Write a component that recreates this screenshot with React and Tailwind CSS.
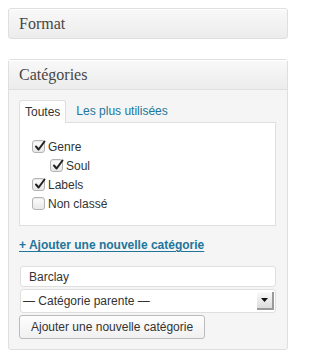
import React from 'react';

const serif = { fontFamily: '"Liberation Serif", Georgia, serif' };

const Check = ({ checked }) => (
  <span className="relative inline-flex h-[13px] w-[13px] shrink-0 items-center justify-center rounded-[3px] border border-[#b4b4b4] bg-gradient-to-b from-[#fdfdfd] to-[#e8e8e8] shadow-[inset_0_1px_1px_rgba(0,0,0,0.08)]">
    {checked && (
      <svg width="12" height="12" viewBox="0 0 12 12" className="absolute left-[1px] top-[-1px]">
        <path d="M2 6.5 L4.6 9.5 L10.5 1.5" fill="none" stroke="#222" strokeWidth="2" strokeLinecap="round" strokeLinejoin="round" />
      </svg>
    )}
  </span>
);

const Row = ({ label, checked, indent }) => (
  <li className={`flex h-[19px] items-center gap-[3px] ${indent ? 'pl-[18px]' : ''}`}>
    <Check checked={checked} />
    <span>{label}</span>
  </li>
);

export default function App() {
  return (
    <div className="min-h-[358px] w-[296px] bg-white px-[8px] pt-[8px] text-[12px] leading-[16px] text-[#333]" style={{ fontFamily: '"Liberation Sans", Arial, sans-serif' }}>
      {/* Format box */}
      <div className="h-[31px] w-[280px] rounded-[3px] border border-[#dfdfdf] bg-gradient-to-b from-[#f9f9f9] to-[#ececec] shadow-[inset_0_1px_0_#fff]">
        <h3 className="pl-[10px] pt-[5px] text-[16px] leading-[20px] text-[#464646]" style={serif}>Format</h3>
      </div>

      {/* Catégories box */}
      <div className="mt-[20px] w-[280px] rounded-[3px] border border-[#dfdfdf] bg-[#f5f5f5]">
        <div className="h-[30px] border-b border-[#dfdfdf] bg-gradient-to-b from-[#f9f9f9] to-[#ececec] shadow-[inset_0_1px_0_#fff]">
          <h3 className="pl-[10px] pt-[5px] text-[16px] leading-[20px] text-[#464646]" style={serif}>Catégories</h3>
        </div>

        <div className="pl-[10px] pr-[11px] pt-[10px] pb-[10px]">
          {/* tabs */}
          <div className="flex items-end">
            <div className="relative z-10 -mb-px h-[23px] rounded-t-[3px] border border-b-0 border-[#dfdfdf] bg-white px-[5px] pt-[3px] text-[#333]">Toutes</div>
            <div className="h-[22px] px-[10px] pt-[3px] text-[#21759b]">Les plus utilisées</div>
          </div>
          <div className="border border-[#dfdfdf] bg-white pb-[12px] pl-[12px] pt-[14px]">
            <ul>
              <Row label="Genre" checked />
              <Row label="Soul" checked indent />
              <Row label="Labels" checked />
              <Row label="Non classé" />
            </ul>
          </div>

          <a className="mt-[10px] block font-bold leading-[18px] text-[#21759b] underline underline-offset-2" href="#">+ Ajouter une nouvelle catégorie</a>

          <div className="mt-[12px] pl-[1px]">
            <div className="flex h-[21px] items-center rounded-[3px] border border-[#dfdfdf] bg-white pl-[8px]">Barclay</div>
            <div className="mt-[2px] flex h-[24px] items-center justify-between rounded-[3px] border border-[#dfdfdf] bg-white pl-[2px] pr-[1px]">
              <span>— Catégorie parente —</span>
              <span className="flex h-[18px] w-[17px] items-center justify-center border-b-2 border-r-2 border-[#9a9a9a] bg-gradient-to-b from-[#fafafa] to-[#dcdcdc]">
                <svg width="7" height="4" viewBox="0 0 7 4"><path d="M0 0 H7 L3.5 4 Z" fill="#111" /></svg>
              </span>
            </div>
          </div>
          <button className="mt-[2px] block h-[24px] rounded-[3px] border border-[#bbb] bg-gradient-to-b from-[#fefefe] to-[#f0f0f0] px-[11px] text-[12px] text-[#333]">Ajouter une nouvelle catégorie</button>
        </div>
      </div>
    </div>
  );
}
